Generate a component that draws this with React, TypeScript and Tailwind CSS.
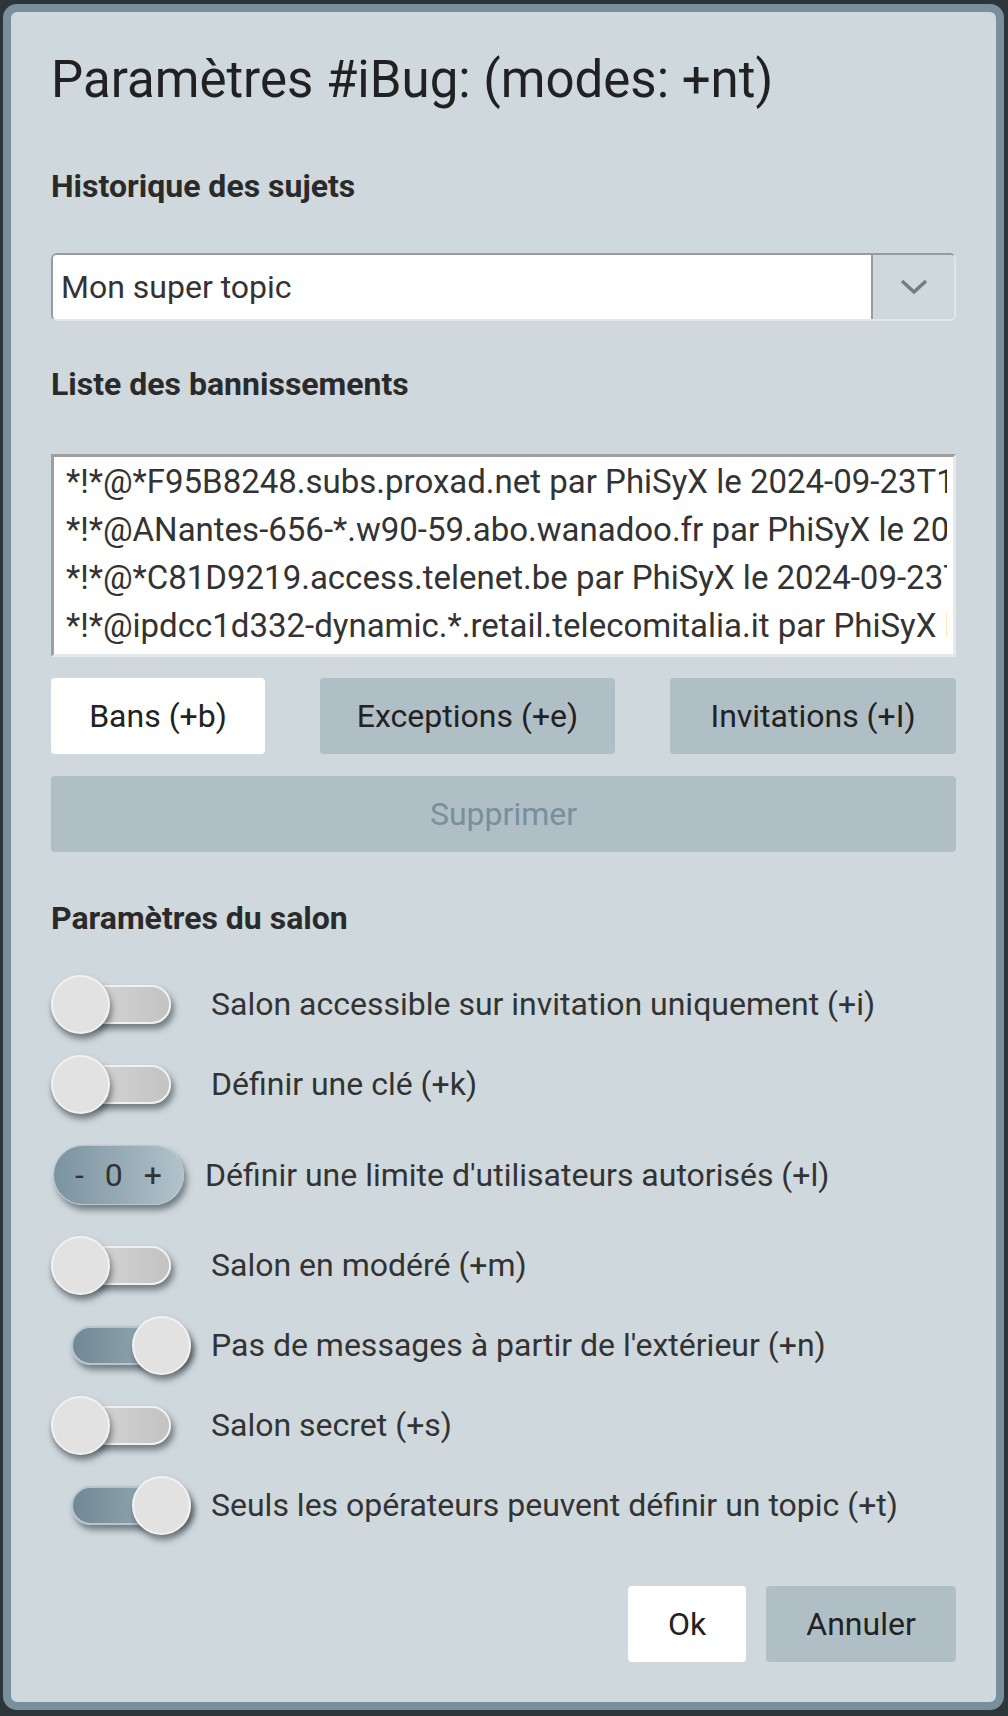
const bans = [
  '*!*@*F95B8248.subs.proxad.net par PhiSyX le 2024-09-23T14:12:05.000Z',
  '*!*@ANantes-656-*.w90-59.abo.wanadoo.fr par PhiSyX le 2024-09-23T14:12:05.000Z',
  '*!*@*C81D9219.access.telenet.be par PhiSyX le 2024-09-23T14:12:05.000Z',
  '*!*@ipdcc1d332-dynamic.*.retail.telecomitalia.it par PhiSyX le 2024-09-23T14:12:05.000Z',
]

type Mode = { label: string; on?: boolean; limit?: boolean }

const modes: Mode[] = [
  { label: 'Salon accessible sur invitation uniquement (+i)' },
  { label: 'Définir une clé (+k)' },
  { label: "Définir une limite d'utilisateurs autorisés (+l)", limit: true },
  { label: 'Salon en modéré (+m)' },
  { label: "Pas de messages à partir de l'extérieur (+n)", on: true },
  { label: 'Salon secret (+s)' },
  { label: 'Seuls les opérateurs peuvent définir un topic (+t)', on: true },
]

function Toggle({ on }: { on?: boolean }) {
  return (
    <div className="relative w-[140px] h-[59px] shrink-0">
      {/* rail */}
      <div
        className={`absolute top-[10px] h-[39px] w-[120px] rounded-full border-2 shadow-[3px_5px_6px_rgba(38,50,56,0.55)] ${
          on
            ? 'left-[20px] border-[#b7c6cd] bg-linear-to-r from-[#6f8894] to-[#a5b7c0]'
            : 'left-0 border-[#f0f0f0] bg-linear-to-r from-[#dedede] to-[#c3c3c3]'
        }`}
      />
      {/* knob */}
      <div
        className={`absolute top-0 h-[59px] w-[59px] rounded-full border-2 border-[#f2f2f2] bg-[#e2e2e2] shadow-[2px_5px_6px_rgba(38,50,56,0.55)] ${
          on ? 'left-[81px]' : 'left-0'
        }`}
      />
    </div>
  )
}

function Stepper() {
  return (
    <div className="ml-[2px] flex h-[60px] w-[131px] shrink-0 items-center justify-between rounded-full border border-[#b9c8cf] bg-linear-to-r from-[#7b93a0] to-[#b1c2ca] px-[21px] text-[32px] leading-none text-[#333] shadow-[3px_5px_6px_rgba(38,50,56,0.55)]">
      <span>-</span>
      <span>0</span>
      <span>+</span>
    </div>
  )
}

export default function App() {
  return (
    <div className="w-[1008px] h-[1716px] bg-[#2b353a] pt-[4px] pl-[3px] font-['Roboto','Liberation_Sans',sans-serif]">
      <div className="flex h-[1706px] w-[1001px] flex-col rounded-[14px] border-[8px] border-[#78909c] bg-[#cfd8dc] px-10 pt-[38px]">
        {/* titre */}
        <h1 className="h-[60px] text-[51px] leading-[60px] font-normal text-[#212121] whitespace-nowrap">
          Paramètres #iBug: (modes: +nt)
        </h1>

        {/* historique */}
        <h2 className="mt-[58px] h-[36px] text-[32px] leading-[36px] font-bold text-[#2a2a2a]">
          Historique des sujets
        </h2>
        <div className="mt-[49px] flex h-[68px] overflow-hidden rounded-[6px] border-2 border-t-[#9a9a9a] border-l-[#9a9a9a] border-r-[#e2e6e8] border-b-[#e2e6e8]">
          <div className="flex flex-1 items-center bg-white pl-[8px] text-[32px] text-[#333]">
            Mon super topic
          </div>
          <div className="flex w-[83px] items-center justify-center border-l-2 border-[#9a9a9a] bg-[#cfd8dc]">
            <svg width="30" height="18" viewBox="0 0 30 18">
              <polyline points="3,3 15,14 27,3" fill="none" stroke="#7a7a7a" strokeWidth="3.5" />
            </svg>
          </div>
        </div>

        {/* bannissements */}
        <h2 className="mt-[45px] h-[36px] text-[32px] leading-[36px] font-bold text-[#2a2a2a]">
          Liste des bannissements
        </h2>
        <div className="mt-[52px] h-[203px] border-[3px] border-t-[#9e9e9e] border-l-[#9e9e9e] border-r-[#e6e9eb] border-b-[#e6e9eb] bg-white pt-[1px] pl-[12px] pr-[6px]">
          <div className="overflow-hidden">
            {bans.map(b => (
              <div key={b} className="h-[48px] text-[33px] leading-[48px] text-[#333] whitespace-nowrap">
                {b}
              </div>
            ))}
          </div>
        </div>

        <div className="mt-[21px] flex justify-between">
          <button className="h-[76px] w-[214px] rounded-[4px] bg-white text-[32px] text-[#222]">Bans (+b)</button>
          <button className="h-[76px] w-[295px] rounded-[4px] bg-[#b0bec5] text-[32px] text-[#222]">Exceptions (+e)</button>
          <button className="h-[76px] w-[286px] rounded-[4px] bg-[#b0bec5] text-[32px] text-[#222]">Invitations (+I)</button>
        </div>
        <button className="mt-[22px] h-[76px] w-full rounded-[4px] bg-[#b0bec5] text-[32px] text-[#78909c]">
          Supprimer
        </button>

        {/* paramètres */}
        <h2 className="mt-[48px] h-[36px] text-[32px] leading-[36px] font-bold text-[#2a2a2a]">
          Paramètres du salon
        </h2>
        <div className="mt-[28px] flex flex-col">
          {modes.map(m =>
            m.limit ? (
              <div key={m.label} className="flex h-[101px] items-center">
                <Stepper />
                <span className="ml-[21px] text-[32px] text-[#333] whitespace-nowrap">{m.label}</span>
              </div>
            ) : (
              <div key={m.label} className="flex h-[80px] items-center">
                <Toggle on={m.on} />
                <span className="ml-[20px] text-[32px] text-[#333] whitespace-nowrap">{m.label}</span>
              </div>
            )
          )}
        </div>

        <div className="mt-[41px] flex justify-end gap-5">
          <button className="h-[76px] w-[118px] rounded-[4px] bg-white text-[32px] text-[#222]">Ok</button>
          <button className="h-[76px] w-[190px] rounded-[4px] bg-[#b0bec5] text-[32px] text-[#222]">Annuler</button>
        </div>
      </div>
    </div>
  )
}
